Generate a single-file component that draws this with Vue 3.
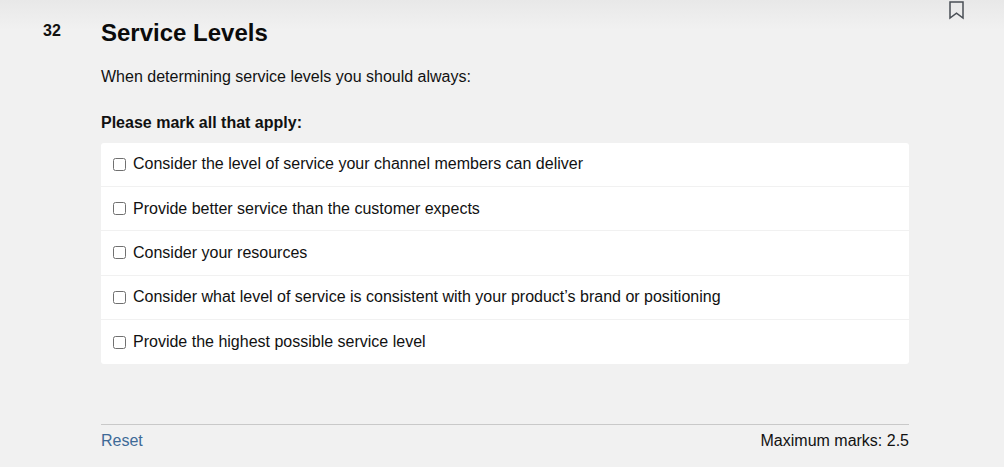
<script setup>
const options = [
  'Consider the level of service your channel members can deliver',
  'Provide better service than the customer expects',
  'Consider your resources',
  'Consider what level of service is consistent with your product’s brand or positioning',
  'Provide the highest possible service level'
]
</script>

<template>
  <div class="page">
    <div class="number">32</div>
    <div class="question">
      <h2>Service Levels</h2>
      <p class="stem">When determining service levels you should always:</p>
      <p class="hint">Please mark all that apply:</p>
      <ul class="options">
        <li v-for="option in options" :key="option">
          <label>
            <span class="box"></span>
            <span>{{ option }}</span>
          </label>
        </li>
      </ul>
      <div class="footer">
        <a class="reset">Reset</a>
        <span>Maximum marks: 2.5</span>
      </div>
    </div>
    <svg class="bookmark" width="16" height="19" viewBox="0 0 16 19" fill="none">
      <path d="M1 1H14V17L7.5 12.2L1 17Z" stroke="#4a4f55" stroke-width="1.5" />
    </svg>
  </div>
</template>

<style>
body {
  margin: 0;
  background: #f0f0f0;
}
</style>

<style scoped>
.page {
  position: relative;
  box-sizing: border-box;
  width: 1004px;
  height: 467px;
  overflow: hidden;
  display: flex;
  padding: 0 95px 0 43px;
  font-family: "Liberation Sans", Arial, sans-serif;
  color: #111;
  background: linear-gradient(#e8e8e8 0, #f1f1f1 30px);
}

.number {
  width: 58px;
  padding-top: 21px;
  font-size: 16px;
  line-height: 19px;
  font-weight: bold;
}

.question {
  flex: 1;
  padding-top: 18px;
  font-size: 16px;
}

h2 {
  margin: 0;
  font-size: 24px;
  line-height: 29px;
  color: #0b0b0b;
}

.stem {
  margin: 20px 0 0;
  line-height: 19px;
}

.hint {
  margin: 27px 0 0;
  line-height: 19px;
  font-weight: bold;
}

.options {
  list-style: none;
  margin: 10.5px 0 0;
  padding: 0;
  background: #fff;
  border-radius: 3px;
}

.options li {
  height: 44.4px;
  border-bottom: 1px solid #f1f1f1;
  box-sizing: border-box;
}

.options li:last-child {
  border-bottom: 0;
}

label {
  display: flex;
  align-items: center;
  height: 100%;
  padding-left: 12px;
  gap: 7px;
}

.box {
  box-sizing: border-box;
  width: 13px;
  height: 13px;
  border: 1px solid #707070;
  border-radius: 2.5px;
  background: #fff;
}

.footer {
  display: flex;
  justify-content: space-between;
  align-items: center;
  margin-top: 59.5px;
  height: 32px;
  border-top: 1px solid #c9c9c9;
}

.reset {
  color: #3e6a97;
}

.bookmark {
  position: absolute;
  left: 949px;
  top: 1px;
}
</style>
